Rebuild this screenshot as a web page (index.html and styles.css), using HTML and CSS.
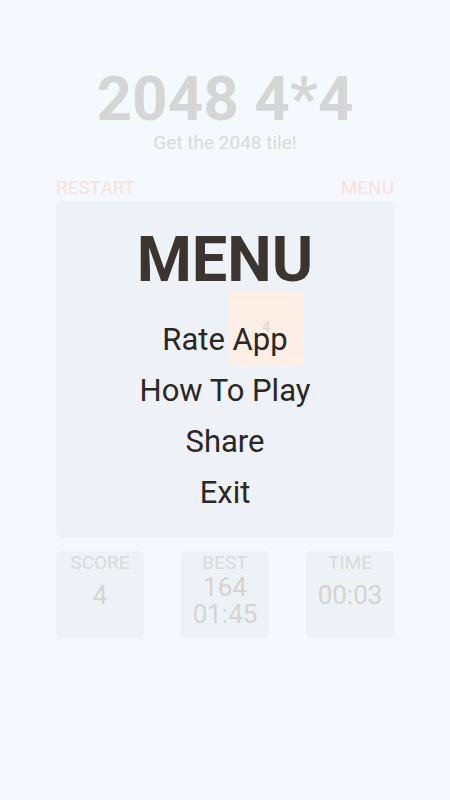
FILE: index.html
```html
<!DOCTYPE html>
<html lang="en">
<head>
    <meta charset="UTF-8">
    <meta name="viewport" content="width=device-width, initial-scale=1.0">
    <link rel="stylesheet" href="styles.css">
</head>
<body>
    <main class="game">
        <!-- Heading -->
        <header class="heading">
            <h1 class="title">2048 4*4</h1>
            <p class="subtitle">Get the 2048 tile!</p>
        </header>

        <!-- Top buttons -->
        <div class="actions">
            <a href="#" class="action">RESTART</a>
            <a href="#" class="action">MENU</a>
        </div>

        <!-- Board with menu overlay -->
        <section class="board">
            <div class="grid">
                <div class="cell"></div><div class="cell"></div><div class="cell"></div><div class="cell"></div>
                <div class="cell"></div><div class="cell"></div><div class="cell tile">4</div><div class="cell"></div>
                <div class="cell"></div><div class="cell"></div><div class="cell"></div><div class="cell"></div>
                <div class="cell"></div><div class="cell"></div><div class="cell"></div><div class="cell"></div>
            </div>

            <div class="overlay">
                <h2 class="menu-title">MENU</h2>
                <nav class="menu-list">
                    <a href="#" class="menu-item">Rate App</a>
                    <a href="#" class="menu-item">How To Play</a>
                    <a href="#" class="menu-item">Share</a>
                    <a href="#" class="menu-item">Exit</a>
                </nav>
            </div>
        </section>

        <!-- Stats -->
        <div class="stats">
            <div class="stat">
                <span class="stat-label">SCORE</span>
                <span class="stat-value">4</span>
            </div>
            <div class="stat">
                <span class="stat-label">BEST</span>
                <span class="stat-value stat-value--double">164<br>01:45</span>
            </div>
            <div class="stat">
                <span class="stat-label">TIME</span>
                <span class="stat-value">00:03</span>
            </div>
        </div>
    </main>
</body>
</html>
```

FILE: styles.css
```css
* {
    box-sizing: border-box;
}

html, body {
    margin: 0;
    padding: 0;
}

body {
    background-color: #F5F8FD;
    font-family: Roboto, "Noto Sans", sans-serif;
    min-height: 800px;
}

a {
    text-decoration: none;
}

.game {
    width: 338px;
    margin: 0 auto;
    padding-top: 67px;
}

.heading {
    text-align: center;
}

.title {
    margin: 0;
    font-size: 62px;
    line-height: 64px;
    font-weight: 700;
    color: #D6D6D6;
}

.subtitle {
    margin: 1px 0 0;
    font-size: 19px;
    line-height: 22px;
    color: #DADADA;
}

.actions {
    display: flex;
    justify-content: space-between;
    margin-top: 22px;
    height: 25px;
}

.action {
    font-size: 19px;
    line-height: 24px;
    color: #F8E1DA;
}

.board {
    position: relative;
    height: 337px;
    border-radius: 6px;
    background-color: #EEF1F6;
}

.grid {
    display: grid;
    grid-template-columns: repeat(4, 1fr);
    grid-auto-rows: 75px;
    gap: 7px;
    padding: 8px;
}

.cell {
    border-radius: 5px;
}

.tile {
    display: flex;
    align-items: center;
    justify-content: center;
    padding-bottom: 4px;
    background-color: #FDEEE6;
    color: #D9D7D4;
    font-size: 14px;
    font-weight: 500;
}

.overlay {
    position: absolute;
    inset: 0;
    padding-top: 24px;
    text-align: center;
}

.menu-title {
    margin: 0;
    font-size: 63px;
    line-height: 70px;
    font-weight: 700;
    color: #3B3531;
}

.menu-list {
    display: flex;
    flex-direction: column;
    align-items: center;
    margin-top: 19px;
}

.menu-item {
    font-size: 31px;
    line-height: 51px;
    color: #2B2724;
}

.stats {
    display: flex;
    justify-content: space-between;
    margin-top: 13px;
}

.stat {
    display: flex;
    flex-direction: column;
    align-items: center;
    width: 88px;
    height: 87px;
    padding-top: 1px;
    border-radius: 5px;
    background-color: #EEF1F6;
}

.stat-label {
    font-size: 19px;
    line-height: 22px;
    color: #DADADA;
}

.stat-value {
    margin-top: 8px;
    font-size: 26px;
    line-height: 27px;
    color: #D6D4D1;
    text-align: center;
}

.stat-value--double {
    margin-top: 0;
}
```
